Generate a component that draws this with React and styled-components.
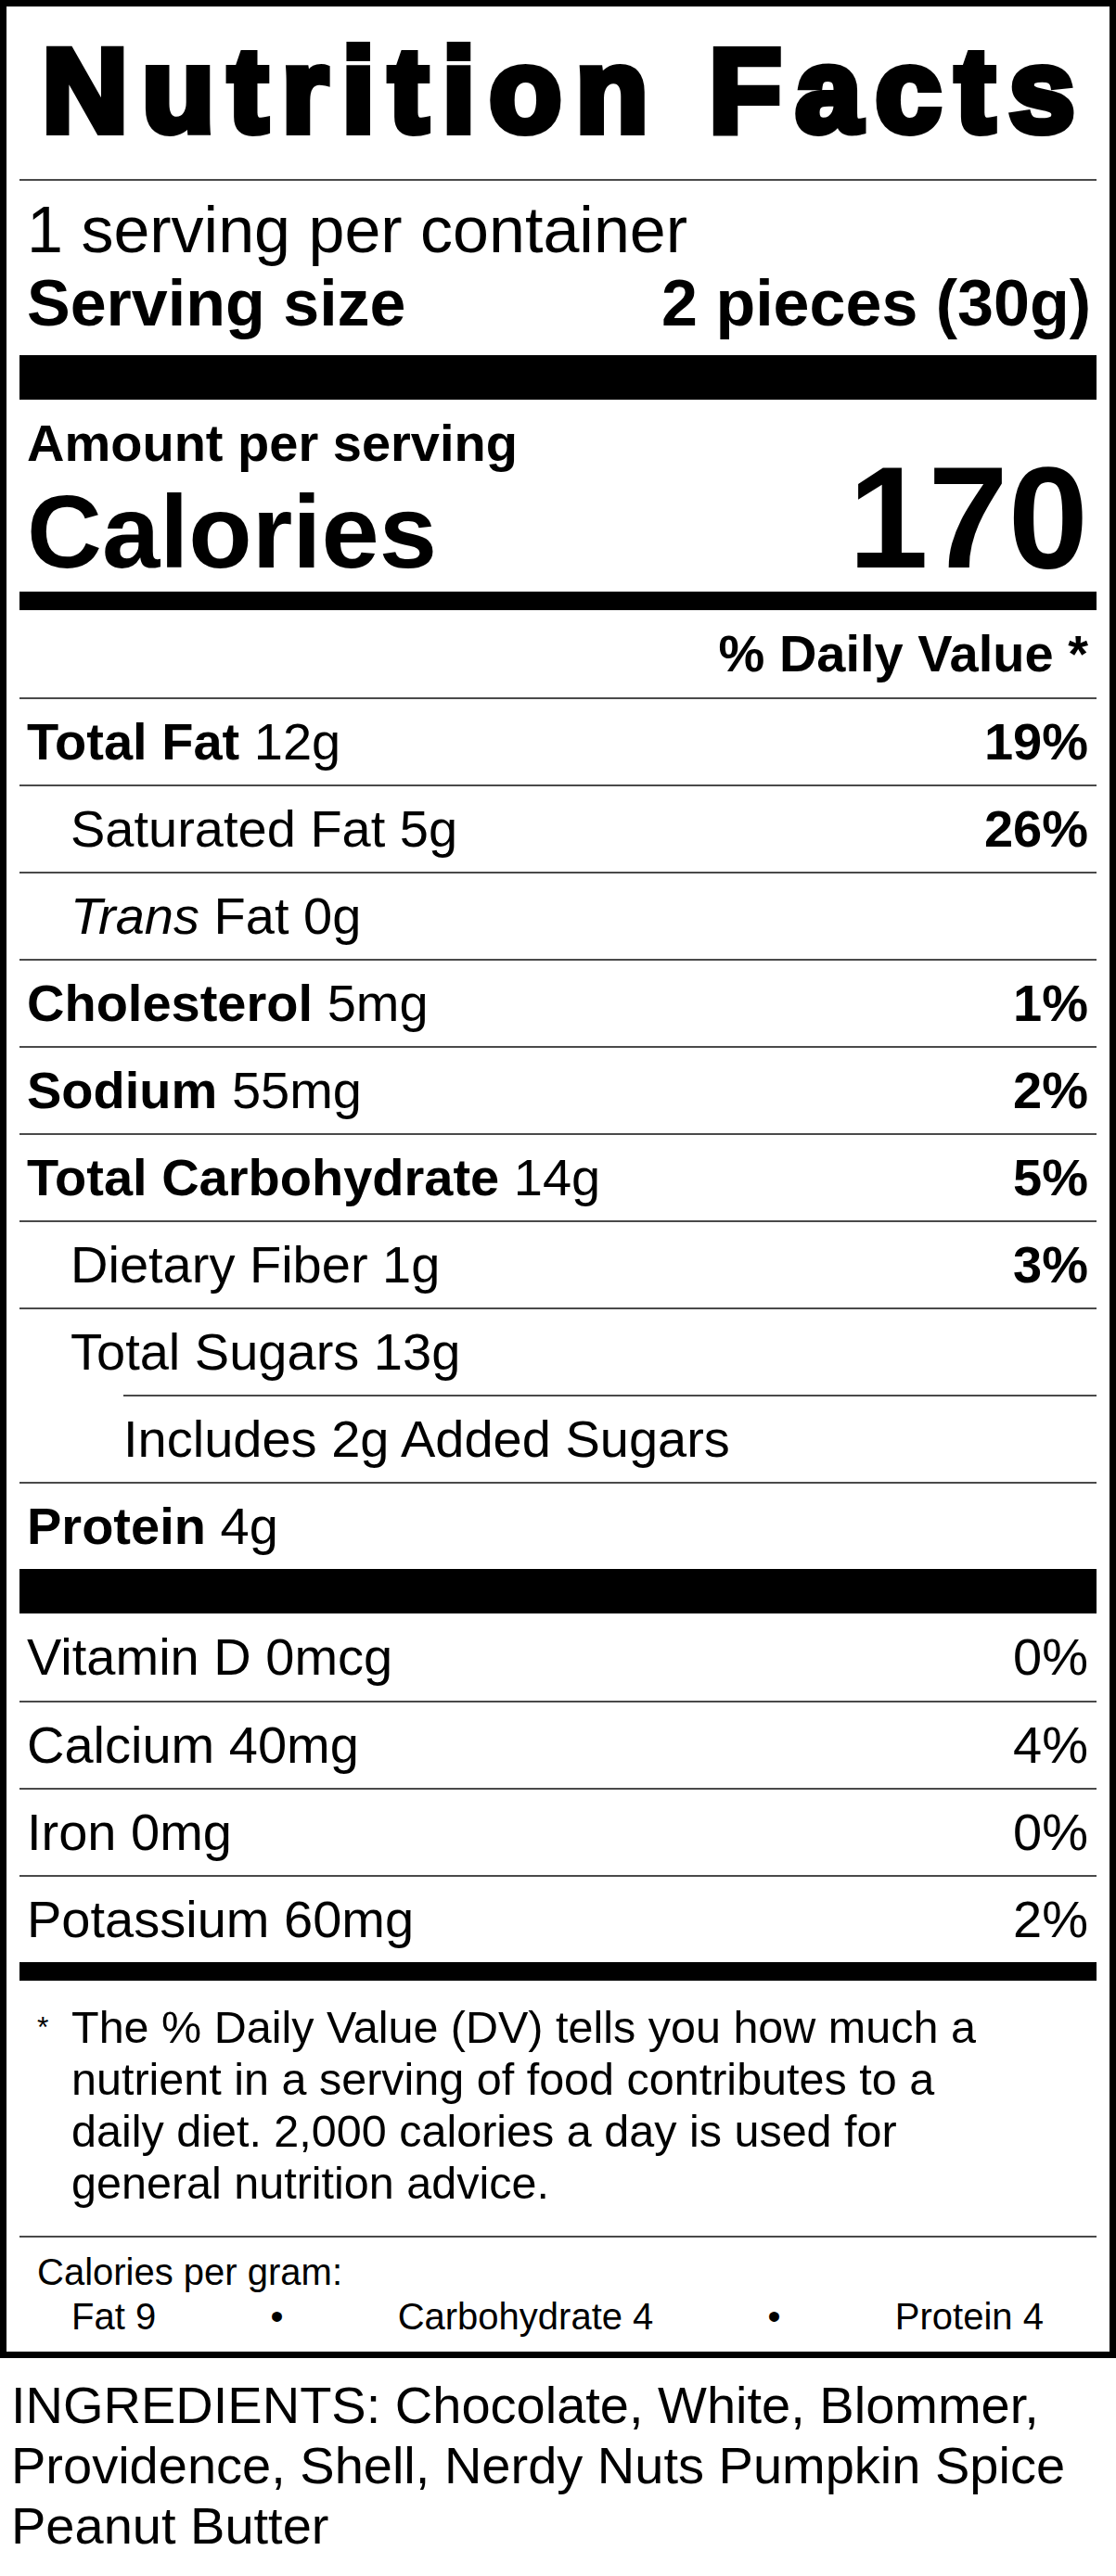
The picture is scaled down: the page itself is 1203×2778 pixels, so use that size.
import React from 'react'
import styled, { createGlobalStyle } from 'styled-components'

const GlobalStyle = createGlobalStyle`
  html, body {
    margin: 0;
    padding: 0;
    background: #fff;
  }
  body {
    font-family: "Liberation Sans", Arial, sans-serif;
    color: #000;
  }
`

const Label = styled.section`
  box-sizing: border-box;
  width: 1203px;
  border: 7px solid #000;
  padding: 0 14px;
  background: #fff;
`

const Title = styled.h1`
  box-sizing: border-box;
  margin: 0;
  height: 186px;
  padding: 0 0 4px 16px;
  display: flex;
  align-items: center;
  justify-content: center;
  font-size: 128px;
  font-weight: 700;
  line-height: 1;
  letter-spacing: 15px;
  -webkit-text-stroke: 8px #000;
`

const ServingBlock = styled.div`
  border-top: 2px solid #4a4a4a;
  padding: 14px 6px 16px 8px;
`

const ServingLine = styled.div`
  display: flex;
  justify-content: space-between;
  font-size: 70px;
  line-height: 79px;
  font-weight: ${p => (p.$bold ? 700 : 400)};
`

const Bar = styled.div`
  height: ${p => p.$h}px;
  background: #000;
`

const AmountBlock = styled.div`
  display: flex;
  justify-content: space-between;
  align-items: flex-end;
  padding: 6px 9px 8px 8px;
  font-weight: 700;
`

const AmountText = styled.div`
  font-size: 56px;
  line-height: 81px;
`

const CaloriesText = styled.div`
  font-size: 112px;
  line-height: 112px;
`

const CaloriesValue = styled.div`
  font-size: 155px;
  line-height: 142px;
`

const Row = styled.div`
  box-sizing: border-box;
  height: 94px;
  display: flex;
  justify-content: ${p => (p.$right ? 'flex-end' : 'space-between')};
  align-items: center;
  margin-left: ${p => (p.$indent === 2 ? 112 : 0)}px;
  padding: 0 9px 0 ${p => (p.$indent === 1 ? 55 : p.$indent === 2 ? 0 : 8)}px;
  border-top: ${p => (p.$line ? '2px solid #4a4a4a' : 'none')};
  font-size: 56px;
  line-height: 1;
`

const Bold = styled.b`
  font-weight: 700;
`

const Italic = styled.i`
  font-style: italic;
`

const Percent = styled.span`
  font-weight: ${p => (p.$bold ? 700 : 400)};
`

const Footnote = styled.div`
  display: flex;
  padding: 22px 0 29px 19px;
  font-size: 48.5px;
  line-height: 56px;
`

const Star = styled.span`
  flex: none;
  width: 37px;
  font-size: 32px;
  line-height: 56px;
`

const FootText = styled.p`
  margin: 0;
  max-width: 1010px;
`

const PerGram = styled.div`
  border-top: 2px solid #4a4a4a;
  padding: 13px 0 14px 19px;
  font-size: 40px;
  line-height: 48px;
`

const PerGramRow = styled.div`
  display: flex;
  justify-content: space-between;
  padding: 0 57px 0 37px;
`

const Ingredients = styled.p`
  margin: 18px 0 0;
  padding: 0 12px;
  font-size: 56px;
  line-height: 65px;
`

const nutrients = [
  { name: 'Total Fat', amount: '12g', dv: '19%', bold: true },
  { name: 'Saturated Fat', amount: '5g', dv: '26%', indent: 1 },
  { name: 'Trans', amount: 'Fat 0g', indent: 1, italic: true },
  { name: 'Cholesterol', amount: '5mg', dv: '1%', bold: true },
  { name: 'Sodium', amount: '55mg', dv: '2%', bold: true },
  { name: 'Total Carbohydrate', amount: '14g', dv: '5%', bold: true },
  { name: 'Dietary Fiber', amount: '1g', dv: '3%', indent: 1 },
  { name: 'Total Sugars', amount: '13g', indent: 1 },
  { name: 'Includes 2g Added Sugars', amount: '', indent: 2 },
  { name: 'Protein', amount: '4g', bold: true },
]

const vitamins = [
  { name: 'Vitamin D 0mcg', dv: '0%' },
  { name: 'Calcium 40mg', dv: '4%' },
  { name: 'Iron 0mg', dv: '0%' },
  { name: 'Potassium 60mg', dv: '2%' },
]

function NutrientName({ item }) {
  if (item.bold) return <span><Bold>{item.name}</Bold> {item.amount}</span>
  if (item.italic) return <span><Italic>{item.name}</Italic> {item.amount}</span>
  return <span>{item.amount ? `${item.name} ${item.amount}` : item.name}</span>
}

export default function App() {
  return (
    <>
      <GlobalStyle />
      <Label>
        <Title>Nutrition Facts</Title>
        <ServingBlock>
          <ServingLine>1 serving per container</ServingLine>
          <ServingLine $bold>
            <span>Serving size</span>
            <span>2 pieces (30g)</span>
          </ServingLine>
        </ServingBlock>
        <Bar $h={48} />
        <AmountBlock>
          <div>
            <AmountText>Amount per serving</AmountText>
            <CaloriesText>Calories</CaloriesText>
          </div>
          <CaloriesValue>170</CaloriesValue>
        </AmountBlock>
        <Bar $h={20} />
        <Row $right>
          <Bold>% Daily Value *</Bold>
        </Row>
        {nutrients.map(item => (
          <Row key={item.name} $line $indent={item.indent}>
            <NutrientName item={item} />
            {item.dv && <Percent $bold>{item.dv}</Percent>}
          </Row>
        ))}
        <Bar $h={48} />
        {vitamins.map((v, i) => (
          <Row key={v.name} $line={i > 0}>
            <span>{v.name}</span>
            <Percent>{v.dv}</Percent>
          </Row>
        ))}
        <Bar $h={20} />
        <Footnote>
          <Star>*</Star>
          <FootText>
            The % Daily Value (DV) tells you how much a nutrient in a serving of food contributes to a daily diet. 2,000 calories a day is used for general nutrition advice.
          </FootText>
        </Footnote>
        <PerGram>
          <div>Calories per gram:</div>
          <PerGramRow>
            <span>Fat 9</span>
            <span>•</span>
            <span>Carbohydrate 4</span>
            <span>•</span>
            <span>Protein 4</span>
          </PerGramRow>
        </PerGram>
      </Label>
      <Ingredients>
        INGREDIENTS: Chocolate, White, Blommer, Providence, Shell, Nerdy Nuts Pumpkin Spice Peanut Butter
      </Ingredients>
    </>
  )
}
